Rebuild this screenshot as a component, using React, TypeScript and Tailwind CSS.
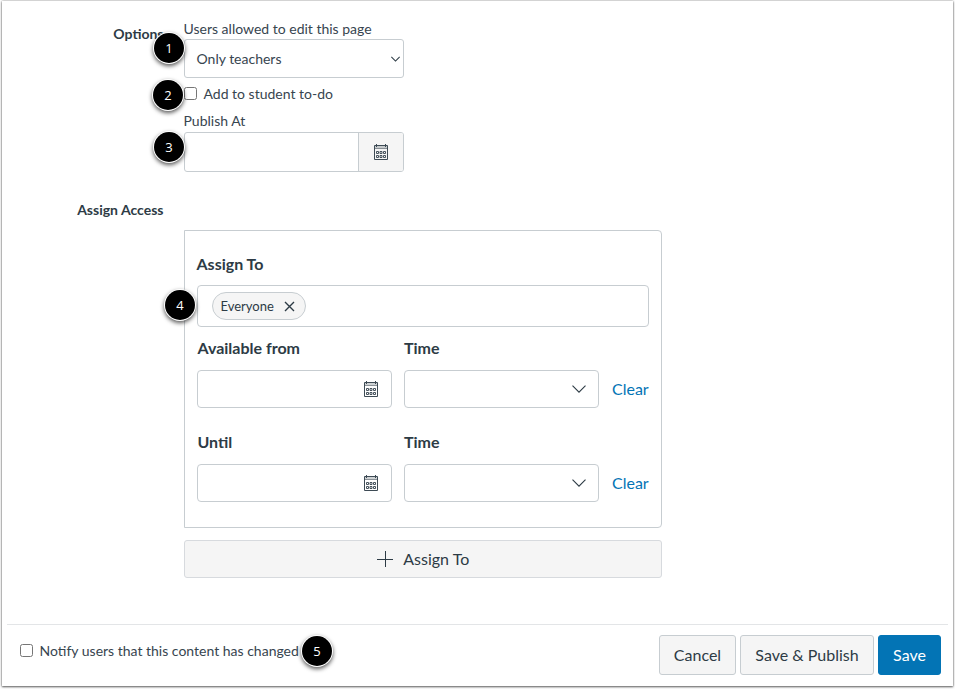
import type { ReactNode } from 'react'
import clsx from 'clsx'

function CalendarIcon() {
  return (
    <svg width="16" height="18" viewBox="0 0 16 18" fill="none" stroke="#3d4a54" className="shrink-0">
      <path d="M1.5 2.5h13v14h-13z" />
      <path d="M2 4h12" strokeOpacity="0.25" strokeWidth="2" />
      <path d="M2 5.5h12" strokeOpacity="0.6" />
      <path d="M3.5 1v3M12.5 1v3" />
      <path
        d="M3.5 8.5h2v2h-2zM7 8.5h2v2h-2zM10.5 8.5h2v2h-2zM3.5 12.5h2v2h-2zM7 12.5h2v2h-2zM10.5 12.5h2v2h-2z"
        strokeWidth="0.95"
      />
    </svg>
  )
}

function Chevron({ width, height }: { width: number; height: number }) {
  return (
    <svg width={width} height={height} viewBox="0 0 14 8" fill="none" stroke="#2d3b45" className="shrink-0">
      <path d="M0.5 0.7 7 7.2l6.5-6.5" vectorEffect="non-scaling-stroke" strokeWidth="1.1" />
    </svg>
  )
}

function Badge({ value, className }: { value: number; className: string }) {
  return (
    <span
      className={clsx(
        'absolute flex size-[30px] items-center justify-center rounded-full bg-black pt-px font-["Open_Sans",sans-serif] text-[13px] text-white shadow-[0_0_0_1px_#fff,0_2px_4px_1px_rgba(0,0,0,0.65)]',
        className,
      )}
    >
      {value}
    </span>
  )
}

function Checkbox() {
  return <span className="size-[13px] shrink-0 rounded-[2.5px] border border-[#767676] bg-white" />
}

function DateRow({ label, className }: { label: string; className?: string }) {
  return (
    <div className={clsx('flex items-end gap-3', className)}>
      <div className="w-[195px]">
        <div className="pl-[0.5px] text-base leading-6 font-bold">{label}</div>
        <div className="mt-[10px] flex h-[38px] items-center justify-end rounded-[4px] border border-[#c7cdd1] pr-3">
          <CalendarIcon />
        </div>
      </div>
      <div className="w-[195px]">
        <div className="text-base leading-6 font-bold">Time</div>
        <div className="mt-[10px] flex h-[38px] items-center justify-end rounded-[4px] border border-[#c7cdd1] pr-3">
          <Chevron width={14} height={8} />
        </div>
      </div>
      <a className="ml-px flex h-[38px] items-center pb-px text-base text-[#0374b5]">Clear</a>
    </div>
  )
}

function FooterButton({ children, className }: { children: ReactNode; className: string }) {
  return (
    <button className={clsx('h-10 rounded-[3px] border text-base', className)}>{children}</button>
  )
}

export default function App() {
  return (
    <div className="h-[689px] w-[955px] bg-[#fdfdfd] pt-px pl-[2px] font-[Lato,sans-serif] text-[#2d3b45]">
      <div className="flex h-[685px] w-[951px] flex-col bg-white shadow-[0_0_2px_rgba(0,0,0,0.4),0_1px_2px_rgba(0,0,0,0.55)]">
        <div className="relative flex pt-[18px]">
          <div className="w-[161.5px] pt-[5px] text-right text-sm leading-5 font-bold">Options</div>
          <div className="ml-[20px] w-[220.5px] text-sm text-[#37454f]">
            <div className="leading-5">Users allowed to edit this page</div>
            <div className="flex h-[39px] items-center justify-between rounded-[3px] border border-[#c7cdd1] pr-[3px] pl-3">
              <span>Only teachers</span>
              <Chevron width={9} height={6} />
            </div>
            <div className="mt-[5px] flex h-5 items-center gap-[7px]">
              <Checkbox />
              <span className="pt-px">Add to student to-do</span>
            </div>
            <div className="mt-[8px] leading-5">Publish At</div>
            <div className="mt-px flex h-10 overflow-hidden rounded-[3px] border border-[#c7cdd1]">
              <div className="flex-1" />
              <div className="flex w-[45px] items-center justify-center border-l border-[#c7cdd1] bg-[#f5f5f5]">
                <CalendarIcon />
              </div>
            </div>
          </div>
          <Badge value={1} className="top-[32px] left-[152px]" />
          <Badge value={2} className="top-[79px] left-[151px]" />
          <Badge value={3} className="top-[131px] left-[152px]" />
        </div>

        <div className="mt-[28px] w-[161.5px] text-right text-sm leading-5 font-bold">Assign Access</div>

        <div className="relative mt-[10px] ml-[181.5px] h-[298px] w-[478.5px] rounded-[4px] rounded-l-none border border-[#c7cdd1] pt-[21px] pl-3">
          <div className="text-base leading-6 font-bold">Assign To</div>
          <div className="mt-[9px] flex h-[42px] w-[452.5px] items-center rounded-[4px] border border-[#c7cdd1] pl-[14px]">
            <span className="flex h-7 w-[94px] items-center gap-[10px] rounded-full border border-[#c7cdd1] bg-[#f5f5f5] pl-2 text-[13px]">
              <span className="pt-px">Everyone</span>
              <svg width="11" height="11" viewBox="0 0 11 11" stroke="#2d3b45" strokeWidth="1.4">
                <path d="M1 1l9 9M10 1l-9 9" />
              </svg>
            </span>
          </div>
          <DateRow label="Available from" className="mt-[9px] ml-[0.5px]" />
          <DateRow label="Until" className="mt-[22px] ml-[0.5px]" />
          <Badge value={4} className="top-[59px] -left-[19.5px]" />
        </div>

        <button className="mt-3 ml-[181.5px] flex h-[38px] w-[478.5px] items-center justify-center gap-[10px] rounded-[3px] border border-[#d7dade] bg-[#f5f5f5] pl-px text-base">
          <svg width="16" height="16" viewBox="0 0 16 16" stroke="#2d3b45">
            <path d="M0 8.5h16M8.5 0v16" />
          </svg>
          Assign To
        </button>

        <div className="relative mx-[5px] mt-[46px] flex items-start justify-between border-t border-[#e3e5e7] pt-[10px] pr-[7px] pl-[12.5px]">
          <div className="flex h-[30px] items-center gap-[7px] text-sm text-[#37454f]">
            <Checkbox />
            <span className="pt-[2px]">Notify users that this content has changed</span>
          </div>
          <div className="flex gap-1">
            <FooterButton className="w-[77px] border-[#c7cdd1] bg-[#f5f5f5]">Cancel</FooterButton>
            <FooterButton className="w-[134px] border-[#c7cdd1] bg-[#f5f5f5]">Save &amp; Publish</FooterButton>
            <FooterButton className="w-[63px] border-[#0374b5] bg-[#0374b5] text-white">Save</FooterButton>
          </div>
          <Badge value={5} className="top-[11px] left-[295px]" />
        </div>
      </div>
    </div>
  )
}
